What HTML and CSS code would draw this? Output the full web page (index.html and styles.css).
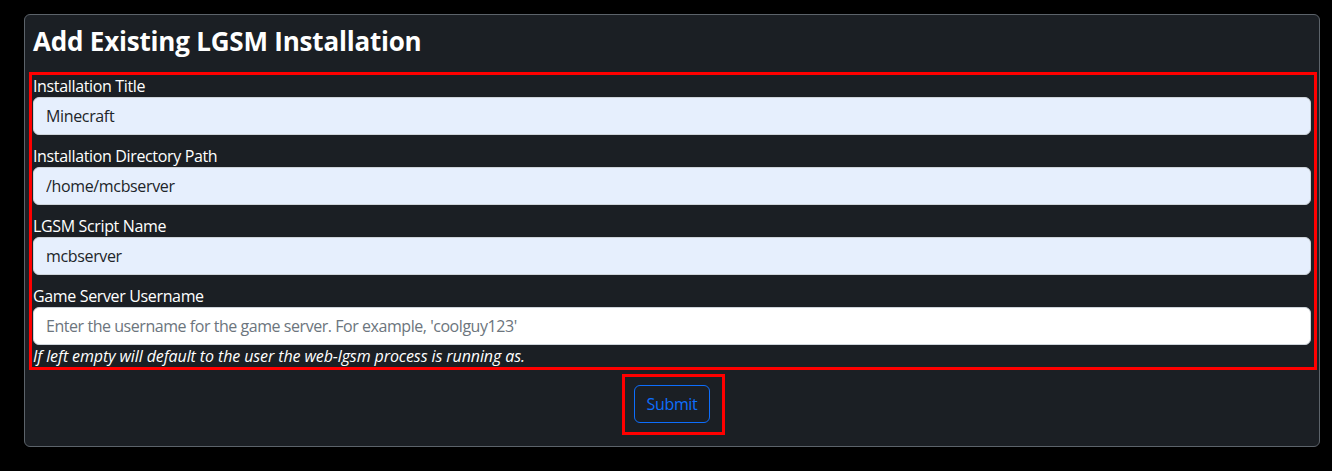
FILE: index.html
```html
<!DOCTYPE html>
<html lang="en">
<head>
<meta charset="utf-8">
<title>Add Existing LGSM Installation</title>
<link rel="stylesheet" href="styles.css">
</head>
<body>
<div class="page">
  <div class="card">
    <h3 class="card-title">Add Existing LGSM Installation</h3>
    <form class="form-box" onsubmit="return false;">
      <div class="group">
        <label class="form-label" for="title">Installation Title</label>
        <input class="form-control filled" id="title" type="text" value="Minecraft">
      </div>
      <div class="group">
        <label class="form-label" for="path">Installation Directory Path</label>
        <input class="form-control filled" id="path" type="text" value="/home/mcbserver">
      </div>
      <div class="group">
        <label class="form-label" for="script">LGSM Script Name</label>
        <input class="form-control filled" id="script" type="text" value="mcbserver">
      </div>
      <div class="group last">
        <label class="form-label" for="user">Game Server Username</label>
        <input class="form-control" id="user" type="text" placeholder="Enter the username for the game server. For example, 'coolguy123'">
        <div class="help"><em>If left empty will default to the user the web-lgsm process is running as.</em></div>
      </div>
    </form>
    <div class="submit-row">
      <div class="submit-box">
        <button class="btn-outline" type="button">Submit</button>
      </div>
    </div>
  </div>
</div>
</body>
</html>
```
FILE: styles.css
```css
* { box-sizing: border-box; }
html, body {
  margin: 0;
  background: #000;
}
body {
  font-family: "Open Sans", "Noto Sans", "Liberation Sans", sans-serif;
  font-size: 16px;
  color: #fff;
}
.page {
  padding: 14px 12px 0 24px;
}
.card {
  background: #1b1f24;
  border: 1px solid #5c636a;
  border-radius: 6px;
  padding: 8px 8px 11px 8px;
}
.card-title {
  margin: 0 0 13px 0;
  font-size: 26px;
  font-weight: 700;
  letter-spacing: -0.2px;
  line-height: 36px;
  color: #fff;
}
.form-box {
  margin: 0 -6px 0 -4px;
  border: 3px solid #ff0000;
  padding: 0 3px 0 1px;
}
.group {
  display: flex;
  flex-direction: column;
  margin-bottom: 10px;
}
.group.last { margin-bottom: 0; }
.form-label {
  display: block;
  line-height: 22px;
  height: 22px;
  color: #fff;
  letter-spacing: -0.35px;
}
.form-control {
  display: block;
  width: 100%;
  height: 38px;
  padding: 6px 12px;
  font-family: inherit;
  font-size: 16px;
  letter-spacing: -0.35px;
  color: #212529;
  background: #fff;
  border: 1px solid #ced4da;
  border-radius: 6px;
  outline: none;
}
.form-control.filled {
  background: #e6effd;
}
.form-control::placeholder {
  color: #6c757d;
  letter-spacing: -0.45px;
}
.help {
  line-height: 22px;
  height: 22px;
  color: #fff;
  letter-spacing: -0.1px;
}
.submit-row {
  display: flex;
  justify-content: center;
  margin-top: 4px;
  padding-left: 3px;
}
.submit-box {
  border: 3px solid #ff0000;
  padding: 8px 12px 9px 9px;
}
.btn-outline {
  display: block;
  height: 38px;
  padding: 6px 12px;
  font-family: inherit;
  font-size: 16px;
  letter-spacing: -0.35px;
  color: #0d6efd;
  background: transparent;
  border: 1px solid #0d6efd;
  border-radius: 6px;
  cursor: pointer;
}
```
